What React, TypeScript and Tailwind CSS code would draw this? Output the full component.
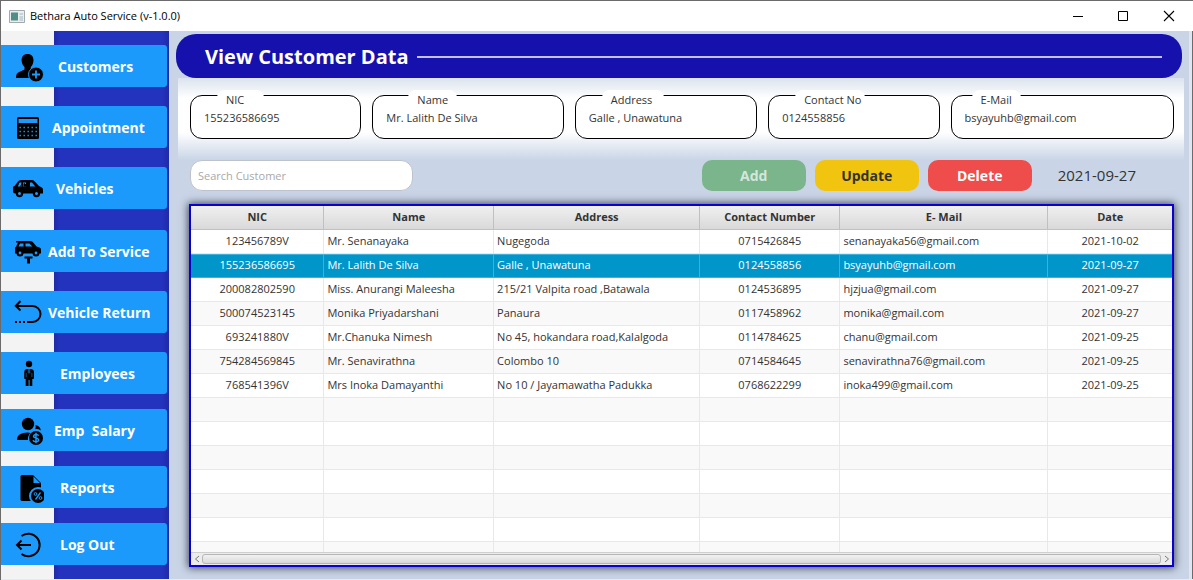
import type { ReactNode } from "react";

type NavItem = { label: string; indent: string; icon: ReactNode };

const iconClass = "h-8 w-8 shrink-0";

const CustomersIcon = (
  <svg className={iconClass} viewBox="0 0 32 32" aria-hidden="true">
    <path d="M15.500 3c4 0 6.200 2.700 6 6.500c-.2 2.800-1 5-2.700 6.500v2.200l3 1.300a7 7 0 0 0-4.300 7.500H4c0-4 1.200-5.400 4.200-6.500l4.300-2v-2.500C10.800 14.500 9.700 12.300 9.600 9.500C9.500 5.700 11.500 3 15.500 3z" />
    <circle cx="24" cy="23.500" r="7.500" stroke="#1c9afb" />
    <path d="M24 19.500v8M20 23.500h8" stroke="#1c9afb" strokeWidth="1.800" />
  </svg>
);

const CalculatorIcon = (
  <svg className={iconClass} viewBox="0 0 32 32" aria-hidden="true">
    <rect x="5" y="5" width="22" height="22" rx="1.500" />
    <path d="M6.500 7h19v4h-19z" fill="#1c9afb" />
    <path d="M7.500 15.500h18M7.500 19.500h18M7.500 23.500h18" stroke="#1c9afb" strokeWidth="1.300" strokeDasharray="1.400 2.600" />
  </svg>
);

const CarIcon = (
  <svg className={iconClass} viewBox="0 0 32 32" aria-hidden="true">
    <path d="M6 8.500Q7 7 9 7h10.500q2 0 3.200 1.400L27 13l2.500 1.200q1.500.8 1.500 2.600v3.700h-2.500H3q-2 0-2-2v-3.800q0-1.500 1.800-2z" />
    <path d="M7.500 9.500h2v4H5.800zM11 9.500h3v4h-3zM18 9.500h2l3.300 4H18z" fill="#1c9afb" />
    <path d="M8.500 13.500l1.500-3M12 13.500v-3l2 1.500v1.500" stroke="#000" />
    <circle cx="7.500" cy="20.500" r="3.700" />
    <circle cx="24.500" cy="20.500" r="3.700" />
    <circle cx="7.500" cy="20.500" r="1.500" fill="#1c9afb" />
    <circle cx="24.500" cy="20.500" r="1.500" fill="#1c9afb" />
  </svg>
);

const LiftIcon = (
  <svg className={iconClass} viewBox="0 0 32 32" aria-hidden="true">
    <path d="M4 5h14q2 0 3 1.300l3.500 4.200l3 1q1.500.6 1.500 2v4H3v-5q0-1.500 1.200-2L6 6.500H4z" />
    <path d="M8 7.500h3.500v3H6.500zM13.500 7.500h4l2.800 3h-6.800z" fill="#1c9afb" />
    <circle cx="8" cy="17" r="3.500" />
    <circle cx="24" cy="17" r="3.500" />
    <circle cx="8" cy="17" r="1.400" fill="#1c9afb" />
    <circle cx="24" cy="17" r="1.400" fill="#1c9afb" />
    <path d="M12.500 20.500h8v2h-2.500v5h-3v-5h-2.500z" />
  </svg>
);

const ReturnIcon = (
  <svg className={iconClass} viewBox="0 0 32 32" fill="none" stroke="#000" strokeWidth="2" aria-hidden="true">
    <path d="M4 9h16.500a8 8 0 0 1 0 16H15" />
    <path d="M8.500 4L3.800 9l4.700 4.500" />
    <path d="M3 25h11" strokeDasharray="2 2" />
  </svg>
);

const EmployeeIcon = (
  <svg className={iconClass} viewBox="0 0 32 32" aria-hidden="true">
    <circle cx="17" cy="6" r="3.200" />
    <path d="M14.500 11h5q2.500.3 2.500 3v6q0 1-1 1h-.7v7H17.600v-6h-1v6H13.700v-7H13q-.8 0-.8-1v-6q0-2.700 2.300-3z" />
    <path d="M16.200 11.500h1.600l.5 3-1.300 1.500-1.300-1.500z" fill="#1c9afb" />
    <path d="M17 12v4" stroke="#000" />
    <path d="M14.200 15v4M19.900 15v4" stroke="#1c9afb" strokeWidth=".5" />
  </svg>
);

const SalaryIcon = (
  <svg className={iconClass} viewBox="0 0 32 32" aria-hidden="true">
    <circle cx="16" cy="9" r="6.200" />
    <path d="M15.500 17.500q2 0 3 .6a8 8 0 0 0-2.500 6.900H5q0-4 3-5.700q2.500-1.700 7.500-1.800zM23.500 10q5 1 5.300 5.500q-2.500-1.700-5.500-1.300q.8-2 .2-4.200z" />
    <circle cx="24" cy="23" r="7" />
    <path d="M26.800 20.700q-.8-1.300-2.800-1.300t-2.500 1.700q0 1.500 2.500 1.900t2.700 2q-.2 1.700-2.700 1.700t-3-1.500M24 17.700v10.500" fill="none" stroke="#1c9afb" strokeWidth="1.500" />
  </svg>
);

const ReportIcon = (
  <svg className={iconClass} viewBox="0 0 32 32" aria-hidden="true">
    <path d="M10 3h11l8 8v18H10q-1.500 0-1.500-1.500v-23Q8.500 3 10 3z" />
    <path d="M21.500 4.500v6.500h6.500z" fill="#1c9afb" />
    <circle cx="26" cy="24" r="9" fill="#1c9afb" />
    <circle cx="26" cy="24" r="7" />
    <path d="M28.500 20.500l-5 7" stroke="#1c9afb" strokeWidth="1.300" />
    <circle cx="23.500" cy="22" r="1.400" fill="none" stroke="#1c9afb" />
    <circle cx="28.500" cy="26" r="1.400" fill="none" stroke="#1c9afb" />
  </svg>
);

const LogOutIcon = (
  <svg className={iconClass} viewBox="0 0 32 32" fill="none" stroke="#000" strokeWidth="2" aria-hidden="true">
    <path d="M9.500 7a11.300 11.300 0 1 1 0 18" />
    <path d="M19 16H5M9.500 11.500L5 16l4.500 4.500" />
  </svg>
);

const navGroups: { className: string; items: NavItem[] }[] = [
  {
    className: "gap-[19px]",
    items: [
      { label: "Customers", indent: "ml-2.5", icon: CustomersIcon },
      { label: "Appointment", indent: "ml-1", icon: CalculatorIcon },
      { label: "Vehicles", indent: "ml-2", icon: CarIcon },
    ],
  },
  {
    className: "mt-[21px] gap-[19px]",
    items: [
      { label: "Add To Service", indent: "ml-0", icon: LiftIcon },
      { label: "Vehicle Return", indent: "ml-0", icon: ReturnIcon },
      { label: "Employees", indent: "ml-3", icon: EmployeeIcon },
    ],
  },
  {
    className: "mt-[15px] gap-[15px]",
    items: [
      { label: "Emp  Salary", indent: "ml-1.5", icon: SalaryIcon },
      { label: "Reports", indent: "ml-3", icon: ReportIcon },
      { label: "Log Out", indent: "ml-3", icon: LogOutIcon },
    ],
  },
];

const fields = [
  { id: "nic", label: "NIC", value: "155236586695", labelClass: "ml-[27px] pl-[9px] pr-5" },
  { id: "name", label: "Name", value: "Mr. Lalith De Silva", labelClass: "ml-9 px-[9px]" },
  { id: "address", label: "Address", value: "Galle , Unawatuna", labelClass: "ml-[27px] pl-[9px] pr-3" },
  { id: "contact", label: "Contact No", value: "0124558856", labelClass: "ml-[27px] pl-[9px] pr-1" },
  { id: "email", label: "E-Mail", value: "bsyayuhb@gmail.com", labelClass: "ml-[21px] px-[9px]" },
];

const columns = [
  { title: "NIC", width: "w-[13.6%]", cell: "text-center" },
  { title: "Name", width: "w-[17.3%]", cell: "text-left" },
  { title: "Address", width: "w-[21%]", cell: "text-left" },
  { title: "Contact Number", width: "w-[14.3%]", cell: "text-center" },
  { title: "E- Mail", width: "w-[21.2%]", cell: "text-left" },
  { title: "Date", width: "w-[12.6%]", cell: "text-center" },
];

const customers = [
  ["123456789V", "Mr. Senanayaka", "Nugegoda", "0715426845", "senanayaka56@gmail.com", "2021-10-02"],
  ["155236586695", "Mr. Lalith De Silva", "Galle , Unawatuna", "0124558856", "bsyayuhb@gmail.com", "2021-09-27"],
  ["200082802590", "Miss. Anurangi Maleesha", "215/21 Valpita road ,Batawala", "0124536895", "hjzjua@gmail.com", "2021-09-27"],
  ["500074523145", "Monika Priyadarshani", "Panaura", "0117458962", "monika@gmail.com", "2021-09-27"],
  ["693241880V", "Mr.Chanuka Nimesh", "No 45, hokandara road,Kalalgoda", "0114784625", "chanu@gmail.com", "2021-09-25"],
  ["754284569845", "Mr. Senavirathna", "Colombo 10", "0714584645", "senavirathna76@gmail.com", "2021-09-25"],
  ["768541396V", "Mrs Inoka Damayanthi", "No 10 / Jayamawatha Padukka", "0768622299", "inoka499@gmail.com", "2021-09-25"],
];
const selectedNic = "155236586695";
const emptyRow = ["", "", "", "", "", ""];
const rows = [...customers, ...Array.from({ length: 7 }, () => emptyRow)];

function TitleBar() {
  return (
    <header className="flex h-[31px] shrink-0 items-center border-t border-[#6b6b6b] bg-white pl-2">
      <svg className="h-[13px] w-4" viewBox="0 0 16 13" aria-hidden="true">
        <path d="M.5.5h15v12H.5z" fill="#e9eef0" stroke="#a3a9ac" />
        <path d="M2 2.500h7v8H2z" fill="#4f8f86" />
        <path d="M10.500 3h3.500v2h-3.500zM10.500 6h3.500v5h-3.500z" fill="#c3d3d8" />
      </svg>
      <span className="ml-[5px] flex-1 text-[11px] text-black">Bethara Auto Service (v-1.0.0)</span>
      <button type="button" aria-label="Minimize" className="flex h-full w-[45px] items-center justify-center">
        <svg className="h-3 w-3" viewBox="0 0 12 12" aria-hidden="true">
          <path d="M1 6.500h10" stroke="#000" />
        </svg>
      </button>
      <button type="button" aria-label="Maximize" className="flex h-full w-[45px] items-center justify-center">
        <svg className="h-3 w-3" viewBox="0 0 12 12" fill="none" aria-hidden="true">
          <path d="M1.500 1.500h9v9h-9z" stroke="#000" />
        </svg>
      </button>
      <button type="button" aria-label="Close" className="mr-px flex h-full w-[47px] items-center justify-center">
        <svg className="h-3 w-3" viewBox="0 0 12 12" aria-hidden="true">
          <path d="M1 1l10 10M11 1L1 11" stroke="#000" strokeWidth="1.100" />
        </svg>
      </button>
    </header>
  );
}

function Sidebar() {
  return (
    <nav className="flex w-[168px] shrink-0 flex-col bg-[linear-gradient(to_right,#f3f3f3_53px,#1f2aa6_53px,#2433bd_59px,#2433bd_161px,#1f2aa6_168px)] pt-3.5 pr-0.5">
      {navGroups.map((group, index) => (
        <div key={index} className={`flex flex-col ${group.className}`}>
          {group.items.map((item) => (
            <button
              key={item.label}
              type="button"
              className="flex h-[42px] items-center rounded-r-[3px] bg-[#1c9afb] pt-px pl-[11px] text-left text-sm font-bold text-white"
            >
              {item.icon}
              <span className="ml-1 whitespace-pre">
                <span className={item.indent}>{item.label}</span>
              </span>
            </button>
          ))}
        </div>
      ))}
    </nav>
  );
}

function CustomerFields() {
  return (
    <form className="mr-[5px] ml-[9px] grid grid-cols-[171fr_191fr_182fr_171fr_223fr] gap-[11px] bg-[linear-gradient(to_bottom,#dbe3ee,#ffffff_25%,#ffffff_66%,#c9d5e6)] pt-3 pr-2.5 pb-[21px] pl-3">
      {fields.map((field) => (
        <div key={field.id} className="flex flex-col items-start">
          <label htmlFor={field.id} className={`z-10 rounded-lg bg-white text-[11px] leading-5 text-[#333] ${field.labelClass}`}>
            {field.label}
          </label>
          <input
            id={field.id}
            defaultValue={field.value}
            className="-mt-[15px] h-11 w-full rounded-xl border border-black bg-white px-[13px] text-[11px] text-[#333] outline-none"
          />
        </div>
      ))}
    </form>
  );
}

function Toolbar() {
  const button = "h-[31px] w-[104px] rounded-[10px] text-sm font-bold";
  return (
    <div className="flex items-center pr-[53px] pl-[21px]">
      <input
        type="search"
        aria-label="Search Customer"
        placeholder="Search Customer"
        className="h-[31px] w-[223px] rounded-xl border border-[#bcc3cd] bg-white px-[7px] text-[11px] outline-none placeholder:text-[#a9a9a9]"
      />
      <div className="ml-auto flex items-center gap-[9px]">
        <button type="button" className={`${button} bg-[#7ab58c] text-[#d3e6dc]`}>Add</button>
        <button type="button" className={`${button} bg-[#f1c40f] text-[#333]`}>Update</button>
        <button type="button" className={`${button} bg-[#ee4d4b] text-white`}>Delete</button>
      </div>
      <time dateTime="2021-09-27" className="ml-[26px] text-[15px] text-[#333]">2021-09-27</time>
    </div>
  );
}

function CustomerTable() {
  return (
    <div className="mt-[13px] mr-[15px] ml-5 flex min-h-0 flex-1 flex-col border-2 border-[#0a00d0] bg-white shadow-[0_0_8px_1px_rgba(20,25,45,0.75)]">
      <div className="min-h-0 flex-1 overflow-hidden">
        <table className="w-full table-fixed border-separate border-spacing-0 text-[11px] text-[#333]">
          <thead>
            <tr className="h-6">
              {columns.map((column) => (
                <th
                  key={column.title}
                  className={`${column.width} border-r border-b border-[#c0c0c0] bg-[linear-gradient(to_bottom,#f0f0f0,#d9d9d9)] p-0 font-bold last:border-r-0`}
                >
                  {column.title}
                </th>
              ))}
            </tr>
          </thead>
          <tbody>
            {rows.map((row, rowIndex) => {
              const selected = row[0] === selectedNic;
              const tone = selected
                ? "border-[#3fb0da] bg-[#0096c9] text-white shadow-[inset_0_1px_#3fb0da]"
                : rowIndex % 2
                  ? "border-[#e8e8e8] bg-[#f9f9f9]"
                  : "border-[#e8e8e8] bg-white";
              return (
                <tr key={rowIndex} className="h-6">
                  {row.map((value, columnIndex) => (
                    <td
                      key={columnIndex}
                      className={`truncate border-r border-b px-[3px] py-0 last:border-r-0 ${tone} ${columns[columnIndex].cell}`}
                    >
                      {value}
                    </td>
                  ))}
                </tr>
              );
            })}
          </tbody>
        </table>
      </div>
      <div className="flex h-[13px] shrink-0 items-center border-t border-[#cfcfcf] bg-[#ececec]">
        <button type="button" aria-label="Scroll left" className="flex w-[11px] justify-center">
          <svg className="h-2 w-1.5" viewBox="0 0 6 8" fill="none" stroke="#777" aria-hidden="true">
            <path d="M5 1L1.500 4L5 7" />
          </svg>
        </button>
        <div className="h-2.5 flex-1 rounded-[3px] border border-[#b5b5b5] bg-[linear-gradient(to_bottom,#f2f2f2,#d8d8d8)]" />
        <button type="button" aria-label="Scroll right" className="flex w-[11px] justify-center">
          <svg className="h-2 w-1.5" viewBox="0 0 6 8" fill="none" stroke="#777" aria-hidden="true">
            <path d="M1 1l3.500 3L1 7" />
          </svg>
        </button>
      </div>
    </div>
  );
}

export default function App() {
  return (
    <div className="flex h-screen flex-col border-l border-[#6b6b6b] bg-[#c9d5e6] font-['Open_Sans','Noto_Sans',sans-serif]">
      <TitleBar />
      <div className="flex min-h-0 flex-1 border-b border-[#e6ebf2]">
        <Sidebar />
        <main className="flex min-w-0 flex-1 flex-col pb-3">
          <div className="mt-[3px] mr-[7px] ml-[7px] flex h-11 shrink-0 items-center rounded-[20px] bg-[#1610ad] pt-px pr-5 pl-[29px]">
            <h1 className="text-xl font-bold text-white">View Customer Data</h1>
            <div className="ml-2 h-0.5 flex-1 bg-[#c3c0ee]" />
          </div>
          <CustomerFields />
          <Toolbar />
          <CustomerTable />
        </main>
        <div className="w-1 shrink-0 border-r border-[#6b6b6b] bg-[#dfe6f0]" />
      </div>
    </div>
  );
}
